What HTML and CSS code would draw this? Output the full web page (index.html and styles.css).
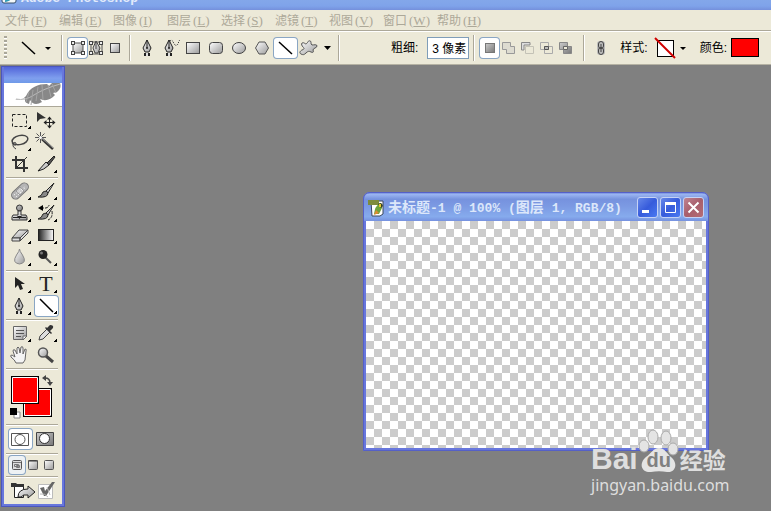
FILE: index.html
```
<!DOCTYPE html>
<html lang="zh-CN">
<head>
<meta charset="utf-8">
<title>Adobe Photoshop</title>
<link rel="stylesheet" href="styles.css">
</head>
<body>
<svg class="defs" aria-hidden="true">
  <defs>
    <linearGradient id="metal" x1="0" y1="0" x2="1" y2="1"><stop offset="0" stop-color="#fff"/><stop offset="1" stop-color="#9a9a9a"/></linearGradient>
    <linearGradient id="ramp"><stop offset="0" stop-color="#222"/><stop offset="1" stop-color="#fff"/></linearGradient>
    <linearGradient id="dark" x1="0" y1="0" x2="1" y2="1"><stop offset="0" stop-color="#ccc"/><stop offset="1" stop-color="#777"/></linearGradient>
    <symbol id="nib" viewBox="0 0 12 18"><path d="M6 1 2 9l2 4h4l2-4z" fill="url(#metal)" stroke="#222"/><path d="M6 1v8" stroke="#222"/><circle cx="6" cy="9" r="1" fill="#222"/><path d="M3 14h6v3H3z" fill="#222"/><path d="M5 14h2v3H5z" fill="#ddd"/></symbol>
  </defs>
</svg>

<header class="titlebar">
  <svg class="app-icon" width="16" height="16" viewBox="0 0 16 16"><rect x="1" y="1" width="14" height="14" rx="2" fill="#f4f8fa" stroke="#38506c"/><path d="M4 14c0-6 3-8 7-9 1 5-1 8-7 9" fill="#2f9bb5"/></svg>
  <h1>Adobe Photoshop</h1>
</header>

<nav class="menubar">
  <button>文件<span>(<u>F</u>)</span></button>
  <button>编辑<span>(<u>E</u>)</span></button>
  <button>图像<span>(<u>I</u>)</span></button>
  <button>图层<span>(<u>L</u>)</span></button>
  <button>选择<span>(<u>S</u>)</span></button>
  <button>滤镜<span>(<u>T</u>)</span></button>
  <button>视图<span>(<u>V</u>)</span></button>
  <button>窗口<span>(<u>W</u>)</span></button>
  <button>帮助<span>(<u>H</u>)</span></button>
</nav>

<div class="options">
  <div class="grip"></div>
  <button class="opt preset" aria-label="直线工具"><svg width="44" height="22"><path d="M10 5 23 17" stroke="#000" stroke-width="1.5"/><path d="M33 10h6l-3 3z"/></svg></button>
  <div class="divider"></div>
  <div class="group modes">
    <button class="opt small on" aria-label="形状图层"><svg width="19" height="20"><rect x="5" y="5" width="10" height="10" fill="url(#metal)" stroke="#555"/><path d="M3 3h4v4H3zM13 3h4v4h-4zM3 13h4v4H3zM13 13h4v4h-4z" fill="#444"/><path d="M4 4h2v2H4zM14 4h2v2h-2zM4 14h2v2H4zM14 14h2v2h-2z" fill="#eee"/></svg></button>
    <button class="opt small" aria-label="路径"><svg width="19" height="20"><path d="M4 4h11v12H4z" fill="none" stroke="#555"/><path d="M2 3h4v4H2zM12 3h4v4h-4zM2 13h4v4H2zM12 13h4v4h-4z" fill="#444"/><path d="M3 4h2v2H3zM13 4h2v2h-2zM3 14h2v2H3zM13 14h2v2h-2z" fill="#eee"/><path d="M9 3 6 10l2 5h3l2-5z" fill="url(#metal)" stroke="#444"/><path d="M9 4v7" stroke="#444"/></svg></button>
    <button class="opt small" aria-label="填充像素"><svg width="19" height="20"><rect x="4.500" y="5.500" width="9" height="9" fill="url(#metal)" stroke="#444"/></svg></button>
  </div>
  <div class="divider"></div>
  <div class="group tools">
    <button class="opt" aria-label="钢笔"><svg width="23" height="20"><use href="#nib" x="5" y="1" width="12" height="18"/></svg></button>
    <button class="opt" aria-label="自由钢笔"><svg width="23" height="20"><use href="#nib" x="4" y="1" width="12" height="18"/><path d="M11 3c4-3 3 6 7 4 2-1 1-4 3-5" fill="none" stroke="#333" stroke-dasharray="1 1"/></svg></button>
    <button class="opt" aria-label="矩形"><svg width="23" height="20"><rect x="4.500" y="4.500" width="13" height="11" fill="url(#metal)" stroke="#444"/></svg></button>
    <button class="opt" aria-label="圆角矩形"><svg width="23" height="20"><rect x="4.500" y="4.500" width="13" height="11" rx="3" fill="url(#metal)" stroke="#444"/></svg></button>
    <button class="opt" aria-label="椭圆"><svg width="23" height="20"><ellipse cx="11" cy="10" rx="6.500" ry="5.500" fill="url(#metal)" stroke="#444"/></svg></button>
    <button class="opt" aria-label="多边形"><svg width="23" height="20"><path d="m4.500 10 3.500-6h6l3.500 6-3.500 6H8z" fill="url(#metal)" stroke="#555"/></svg></button>
    <button class="opt on" aria-label="直线"><svg width="23" height="20"><path d="M5 4 18 16" stroke="#000" stroke-width="1.500"/></svg></button>
    <button class="opt" aria-label="自定形状"><svg width="23" height="20"><path d="M5 5c2-1 3 1 4 1 2-1 2-4 4-3 2 0 0 3 2 4 2 0 5-1 5 1s-4 2-4 4c1 2 0 3-2 2s-3-1-5 1-3 2-5 1-1-3 1-4c3-1 2-2 1-3S4 6 5 5z" fill="url(#metal)" stroke="#555"/></svg></button>
    <button class="opt more" aria-label="几何选项"><svg width="15" height="20"><path d="M4 8h7l-3.500 4z"/></svg></button>
  </div>
  <div class="divider"></div>
  <div class="field weight"><label for="weight">粗细:</label><input id="weight" type="text" value="3 像素"></div>
  <div class="divider"></div>
  <div class="group bool">
    <button class="opt small on" aria-label="新建形状图层"><svg width="19" height="20"><rect x="5.500" y="5.500" width="9" height="9" fill="url(#dark)" stroke="#777"/></svg></button>
    <button class="opt small" aria-label="添加到形状区域"><svg width="19" height="20"><path d="M3.500 4.500h8v4h4v7h-8v-4h-4z" fill="#dddbd0" stroke="#999"/></svg></button>
    <button class="opt small" aria-label="从形状区域减去"><svg width="19" height="20"><path d="M7.500 8.500h8v7h-8z" fill="none" stroke="#c4c2b6"/><path d="M3.500 12V4.500H12V7H6v5z" fill="#ddd" stroke="#888"/></svg></button>
    <button class="opt small" aria-label="交叉形状区域"><svg width="19" height="20"><path d="M3.500 4.500h8v7h-8zM7.500 8.500h8v7h-8z" fill="none" stroke="#aaa"/><path d="M7.500 8.500h4v3h-4z" fill="#bbb" stroke="#555"/></svg></button>
    <button class="opt small" aria-label="重叠形状区域除外"><svg width="19" height="20"><path d="M3.500 4.500h8v7h-8zM7.500 8.500h8v7h-8z" fill="url(#dark)" stroke="#888"/><path d="M7.500 8.500h4v3h-4z" fill="#ece9d8" stroke="#666"/></svg></button>
  </div>
  <div class="divider"></div>
  <button class="opt link" aria-label="链接"><svg width="16" height="20"><rect x="4" y="3" width="8" height="14" rx="3" fill="#bbb"/><rect x="5.500" y="3.500" width="5" height="7" rx="2.500" fill="none" stroke="#444"/><rect x="5.500" y="9.500" width="5" height="7" rx="2.500" fill="none" stroke="#444"/><path d="M8 6v8" stroke="#444"/></svg></button>
  <div class="field style"><span>样式:</span><button class="opt" aria-label="样式"><svg width="34" height="22"><rect x="3.500" y="3.500" width="16" height="16" fill="#fff" stroke="#000"/><path d="m1 1 20 20" stroke="#d00000" stroke-width="2"/><path d="M26 10h6l-3 3z"/></svg></button></div>
  <div class="field color"><span>颜色:</span><button class="swatch" aria-label="颜色"></button></div>
</div>

<main class="workspace">
  <aside class="toolbox">
    <div class="tool-title"></div>
    <div class="feather"><svg width="57" height="23" viewBox="0 0 57 23"><path d="M11 16q7 2 11-3C26 4 34 1 43 1l2 2 3-3h8q2 5-3 9l-4 1 2 2q-5 6-12 5l-3-1 2 3q-8 5-12-2l-1 4q-5-1-4-6-4 2-8 1z" fill="#888"/><path d="M12 16q9 2 18-4T56 1" fill="none" stroke="#bbb"/><path d="m25 9-3 10m7-12-2 15m7-18-2 14m6-16 1 15m5-15 3 12m1-13 4 9" stroke="#a4a4a4"/></svg></div>
    <div class="tool-grid">
      <button class="tool flyout" aria-label="矩形选框"><svg width="26" height="22"><rect x="6.500" y="5.500" width="14" height="12" fill="none" stroke="#222" stroke-dasharray="3 2"/></svg></button>
      <button class="tool" aria-label="移动"><svg width="26" height="22"><path d="M5 3v10l3-3 6-1z" fill="#333"/><path d="M17.500 9v9M13 13.500h9" stroke="#222"/><path d="m17.500 7.500-2.500 3h5zM17.500 19.500l-2.500-3h5zM11.500 13.500l3-2.500v5zM23.500 13.500l-3-2.500v5z" fill="#222"/></svg></button>
      <button class="tool flyout" aria-label="套索"><svg width="26" height="22"><ellipse cx="14" cy="9" rx="8" ry="4.500" transform="rotate(-13 14 9)" fill="none" stroke="#444" stroke-width="1.500"/><path d="M7 11q-2 2 1 3t2-2q-3-2-3 3 1 2 3 3" fill="none" stroke="#444"/></svg></button>
      <button class="tool" aria-label="魔棒"><svg width="26" height="22"><path d="m10 8 11 10" stroke="#333" stroke-width="2.500"/><path d="m10 7 11 10" stroke="#999"/><path d="M8.500 1v11M3 6.500h11M4.500 2.500l8 8M12.500 2.500l-8 8" stroke="#555"/><circle cx="8.500" cy="6.500" r="1.500" fill="#fff"/></svg></button>
      <button class="tool" aria-label="裁切"><svg width="26" height="22"><path d="M10 3v12h12M6 7h12v12" fill="none" stroke="#333" stroke-width="2"/><path d="m11 14 10-10" stroke="#333"/></svg></button>
      <button class="tool flyout" aria-label="切片"><svg width="26" height="22"><path d="m6 18 8-9 3 3q-5 5-11 6z" fill="url(#metal)" stroke="#222"/><path d="m15 10 7-7 1 1-6 8z" fill="#555" stroke="#222"/></svg></button>
    </div>
    <hr>
    <div class="tool-grid">
      <button class="tool flyout" aria-label="修复画笔"><svg width="26" height="22"><rect x="4" y="7" width="20" height="8" rx="4" transform="rotate(-43 14 11)" fill="#b5b5b5" stroke="#777"/><path d="m11 11 4-4 4 4-4 4z" transform="translate(-1)" fill="#ccc" stroke="#999"/><path d="m8 15 12-9m-10 11 9-9" stroke="#fff" stroke-dasharray="1 2"/></svg></button>
      <button class="tool flyout" aria-label="画笔"><svg width="26" height="22"><path d="m22 3-8 8 2 2z" fill="#ccc" stroke="#222"/><path d="M6 17q4-1 5-5 4-2 5 1 0 5-10 4z" fill="#888" stroke="#222"/></svg></button>
      <button class="tool flyout" aria-label="仿制图章"><svg width="26" height="22"><circle cx="13.500" cy="6" r="3" fill="url(#dark)" stroke="#333"/><path d="M12 9h3v4h5l1 2v3H6v-3l1-2h5z" fill="url(#metal)" stroke="#333"/><path d="M7 15h13v1H7zM11 14h5l-2.500 3z" fill="#222"/></svg></button>
      <button class="tool flyout" aria-label="历史记录画笔"><svg width="26" height="22"><path d="m22 3-8 8 2 2z" fill="#ccc" stroke="#222"/><path d="M6 17q4-1 5-5 4-2 5 1 0 5-10 4z" fill="#888" stroke="#222"/><path d="M9 6h5q3-1 3-3M20 9q1 7-4 9" fill="none" stroke="#222" stroke-dasharray="3 1"/><path d="M6 6l5-3v6z"/></svg></button>
      <button class="tool flyout" aria-label="橡皮擦"><svg width="26" height="22"><path d="m6 14 7-8h9l-8 8z" fill="url(#metal)" stroke="#444"/><path d="M6 14v3h8v-3zM14 17l8-8V6l-8 8z" fill="#ddd" stroke="#444"/></svg></button>
      <button class="tool flyout" aria-label="渐变"><svg width="26" height="22"><rect x="6.500" y="5.500" width="15" height="11" fill="url(#ramp)" stroke="#222"/></svg></button>
      <button class="tool flyout" aria-label="模糊"><svg width="26" height="22"><path d="M13.500 3q0 2-3 6-5 8 3 9 8-1 3-9-3-4-3-6z" fill="url(#metal)" stroke="#888"/></svg></button>
      <button class="tool flyout" aria-label="减淡"><svg width="26" height="22"><path d="m13 11 6 6" stroke="#555" stroke-width="2"/><circle cx="11" cy="8.500" r="4.500" fill="#222"/><circle cx="9.500" cy="7" r="1.500" fill="#777"/></svg></button>
    </div>
    <hr>
    <div class="tool-grid">
      <button class="tool flyout" aria-label="路径选择"><svg width="26" height="22"><path d="M9 4v11l3-3 2 5 3-1-2-5h4z" fill="#222"/></svg></button>
      <button class="tool flyout type" aria-label="横排文字">T</button>
      <button class="tool flyout" aria-label="钢笔工具"><svg width="26" height="22"><use href="#nib" x="7" y="2" width="12" height="18"/></svg></button>
      <button class="tool flyout on" aria-label="直线形状"><svg width="26" height="22"><path d="m8 4 13 13" stroke="#000" stroke-width="1.500"/></svg></button>
    </div>
    <hr>
    <div class="tool-grid">
      <button class="tool flyout" aria-label="注释"><svg width="26" height="22"><path d="M7.500 4.500h13v10l-3 3h-10z" fill="url(#metal)" stroke="#666"/><path d="M10 8.500h8M10 11.500h8M10 14.500h5" stroke="#555"/><path d="M17 18v-4h4z" fill="#fff" stroke="#666"/></svg></button>
      <button class="tool flyout" aria-label="吸管"><svg width="26" height="22"><path d="m7 18 1-4 7-7 3 3-7 7z" fill="#ddd" stroke="#444"/><path d="m13 6 6 6 1-1-2-2 3-3q1-3-3-3l-3 3-1-1z" fill="#333"/></svg></button>
      <button class="tool" aria-label="抓手"><svg width="26" height="22"><path d="M10 19q-1-3-5-6-1-2 1-2l3 2-2-6q0-2 2-1l2 4V4q1-2 2 0l1 5 1-6q2-1 2 1v6l2-5q2 0 1 2l-1 9-2 3z" fill="#f4f4f4" stroke="#666"/></svg></button>
      <button class="tool" aria-label="缩放"><svg width="26" height="22"><path d="m14 12 7 6" stroke="#444" stroke-width="3"/><circle cx="11" cy="8.500" r="4.500" fill="url(#metal)" stroke="#555" stroke-width="1.500"/></svg></button>
    </div>
    <hr>
    <div class="colors">
      <svg width="52" height="51" role="img" aria-label="前景色和背景色"><path d="M17 17h29v29H17z"/><path d="M18.500 18.500h26v26h-26z" fill="red" stroke="#fff"/><path d="M5 5h28v28H5z"/><path d="M6.500 6.500h25v25h-25z" fill="red" stroke="#fff"/><path d="M39 7q5 0 5 5" fill="none" stroke="#444" stroke-width="1.500"/><path d="m36 7 4-3v6zM44 15l-3-4h6z" fill="#444"/><path d="M8 41h6v6H8z" fill="#fff" stroke="#888"/><path d="M4 37h7v7H4z"/></svg>
    </div>
    <hr>
    <div class="tool-grid masks">
      <button class="tool on" aria-label="标准模式"><svg width="26" height="24"><path d="M5.500 6.500h17v12h-17z" fill="#fff" stroke="#555"/><circle cx="14" cy="12.500" r="5" fill="#fff" stroke="#555"/></svg></button>
      <button class="tool" aria-label="快速蒙版"><svg width="26" height="24"><path d="M4.500 5.500h17v13h-17z" fill="url(#dark)" stroke="#444"/><circle cx="12.500" cy="11.500" r="5" fill="#fff" stroke="#333"/></svg></button>
    </div>
    <hr>
    <div class="screens">
      <button class="tool on" aria-label="标准屏幕"><svg width="16" height="18"><rect x="3.500" y="4.500" width="9" height="9" rx="1" fill="#ddd" stroke="#555"/><path d="M4 6.500h8M5.500 8.500h4v2h-4zM7.500 9.500h3v2h-3z" fill="none" stroke="#777"/></svg></button>
      <button class="tool" aria-label="带菜单栏全屏"><svg width="16" height="18"><rect x="3.500" y="4.500" width="9" height="9" rx="1" fill="url(#metal)" stroke="#555"/><path d="M3 5h10" stroke="#333"/></svg></button>
      <button class="tool" aria-label="全屏"><svg width="16" height="18"><rect x="3.500" y="4.500" width="9" height="9" rx="1" fill="url(#metal)" stroke="#555"/></svg></button>
    </div>
    <hr>
    <div class="tool-grid masks">
      <button class="tool" aria-label="编辑应用"><svg width="30" height="24"><path d="M8.500 6.500h9v12h-9z" fill="#fff" stroke="#222"/><path d="M5 4h5l1 1h7v3H5z" fill="#333"/><path d="M12 18q0-8 10-8V7l7 6-7 6v-3q-5-1-7 2z" fill="url(#metal)" stroke="#222"/></svg></button>
      <button class="tool" aria-label="在线"><svg width="26" height="24"><path d="M6.500 5.500h14v14h-14z" fill="#fff" stroke="#bbb"/><path d="m8 9 4-1 1 4 7-9h3l-9 14h-2z" fill="#666"/><path d="M8 15q5-1 8 3M15 8l3 8" stroke="#bbb" fill="none"/></svg></button>
    </div>
  </aside>

  <section class="doc">
    <header class="doc-title">
      <svg width="18" height="18" viewBox="0 0 18 18"><path d="M3 2h12v13l-3 2H4z" fill="#fff" stroke="#39475d"/><path d="M0 1h11v5H0z" fill="#7d8b3d"/><path d="M6 15q1-8 5-10 3-1 3 4l-3 6z" fill="#6da33b"/><path d="m6 16 2-5 3 3z" fill="#dd8b31"/><path d="M10 5q4-3 5 2l-2 2z" fill="#384523"/><path d="M11 5h2v3h-2z" fill="#e7c72f"/></svg>
      <h2>未标题<span>-1 @ 100% (</span>图层<span> 1, RGB/8)</span></h2>
      <button class="win" aria-label="最小化"><svg width="19" height="19"><path d="M4 12h7v3H4z" fill="#fff"/></svg></button>
      <button class="win" aria-label="最大化"><svg width="19" height="19"><path d="M4.500 5.500h10v9h-10z" fill="none" stroke="#fff"/><path d="M4 4h11v3H4z" fill="#fff"/></svg></button>
      <button class="win close" aria-label="关闭"><svg width="19" height="19"><path d="m4.500 4.500 10 10m0-10-10 10" stroke="#fff" stroke-width="2"/></svg></button>
    </header>
    <div class="canvas"></div>
  </section>

  <div class="watermark">
    <div class="brand">
      <span class="bai">Bai</span>
      <span class="paw"><svg width="42" height="46" viewBox="0 0 42 46"><g stroke="#aaa"><ellipse cx="6" cy="18" rx="5" ry="6"/><ellipse cx="15" cy="9" rx="5" ry="7"/><ellipse cx="28" cy="10" rx="5" ry="7"/><ellipse cx="35" cy="21" rx="5" ry="6"/></g><path d="M21 20c6 0 8 6 12 9 8 7 4 16-4 15-5-1-11-1-16 0-9 1-13-8-5-15 5-3 7-9 13-9z"/></svg><b>du</b></span>
      <span class="jy">经验</span>
    </div>
    <div class="url">jingyan.baidu.com</div>
  </div>
</main>
</body>
</html>
```
FILE: styles.css
```
* { box-sizing: border-box; }

body {
  margin: 0;
  height: 100vh;
  display: flex;
  flex-direction: column;
  overflow: hidden;
  background: #808080;
  font: 12px/16px "Liberation Sans", "Noto Sans CJK SC", sans-serif;
  color: #000;
}

button {
  margin: 0;
  padding: 0;
  border: 0;
  background: none;
  font: inherit;
  color: inherit;
}

svg { display: block; }

.defs { position: absolute; width: 0; height: 0; }

/* Application title, mostly scrolled off the top edge */
.titlebar {
  flex: none;
  height: 10px;
  display: flex;
  align-items: flex-end;
  gap: 4px;
  padding: 0 0 3px 1px;
  overflow: hidden;
  background: linear-gradient(#83a7ea, #7fa3ea 60%, #7590dc);
}

.app-icon { margin-bottom: 3px; }

.titlebar h1 {
  margin: 0;
  font: bold 13px/16px "Liberation Mono", monospace;
  color: #e2ebfb;
}

.menubar {
  flex: none;
  height: 20px;
  display: flex;
  align-items: center;
  padding: 2px 0 0 5px;
  background: #ece9d8;
}

.menubar button {
  width: 54px;
  display: flex;
  align-items: baseline;
  gap: 2px;
  color: #aca899;
}

.menubar span { font: 13px/16px "Liberation Serif", serif; }

/* Options bar */
.options {
  flex: none;
  height: 35px;
  display: flex;
  align-items: center;
  border-top: 1px solid #aca899;
  border-bottom: 1px solid #b5b2a3;
  box-shadow: inset 0 1px #fff;
  background: #ece9d8;
}

.grip {
  width: 3px;
  height: 24px;
  margin: 0 3px 0 4px;
  background: repeating-linear-gradient(#aaa79a 0 2px, #fff 2px 3px, #ece9d8 3px 4px);
}

.divider {
  flex: none;
  width: 2px;
  height: 26px;
  background: #aca899;
  border-right: 1px solid #fff;
}

.preset { margin: 0 5px 0 2px; }
.group { display: flex; align-items: center; }
.modes { padding: 0 4px 0 5px; }
.tools { padding: 0 3px 0 5px; }
.bool { padding: 0 8px 0 5px; }

.on {
  background: #fff;
  border-radius: 3px;
  box-shadow: 0 0 0 1px #8aa6c4;
}

.field { display: flex; align-items: center; }
.weight { margin: 0 4px 0 51px; gap: 9px; }
.style { margin-left: 11px; gap: 6px; }
.color { margin-left: 12px; gap: 4px; }

.field input {
  width: 42px;
  height: 22px;
  padding: 0 0 0 4px;
  border: 1px solid #7f9db9;
  background: #fff;
  font: 12px/20px "Liberation Sans", "Noto Sans CJK SC", sans-serif;
}

.link { margin-left: 8px; }

.swatch {
  width: 28px;
  height: 19px;
  border: 1px solid #000;
  background: #f00;
}

.workspace { flex: 1; position: relative; }

/* Floating tool palette */
.toolbox {
  position: absolute;
  left: 1px;
  top: 1px;
  width: 64px;
  padding-bottom: 1px;
  border: 3px solid #6877dc;
  border-top-width: 1px;
  outline: 1px solid #4b56bd;
  outline-offset: -1px;
  background: #ece9d8;
}

.tool-title { height: 16px; background: linear-gradient(#5265d9, #7f9fee 70%, #6f9ae8); }

.feather {
  height: 24px;
  border-bottom: 1px solid #aca899;
  background: #fff;
}

.tool-grid { display: grid; grid-template-columns: 26px 26px; grid-auto-rows: 22px; padding-left: 2px; }
.feather + .tool-grid { margin-top: 2px; }
.masks { grid-auto-rows: 24px; }
.masks .on { margin: 2px 0 2px 3px; }
.masks .on svg { margin: -2px 0 -2px -3px; }

.tool { position: relative; }

.tool-grid .flyout.on { margin: 1px 0 1px 3px; }
.flyout.on svg { margin: -1px 0 -1px -3px; }

.flyout::after {
  content: "";
  position: absolute;
  right: 1px;
  bottom: 2px;
  width: 3px;
  height: 3px;
  background: linear-gradient(135deg, transparent 40%, #000 40%);
}

.type { font: 22px/22px "Liberation Serif", serif; color: #222; padding-left: 2px; }

.toolbox hr {
  height: 2px;
  margin: 2px 4px 1px 2px;
  border: 0;
  border-top: 1px solid #aca899;
  background: #fff;
}

.colors { padding-left: 2px; }
.screens { display: flex; padding-left: 5px; }
.screens .on { background: #eef2f4; }

/* Document window */
.doc {
  position: absolute;
  left: 363px;
  top: 127px;
  width: 346px;
  border: solid #6877dc;
  border-width: 0 3px 3px;
  outline: 1px solid #5560c8;
  outline-offset: -1px;
  border-radius: 7px 7px 0 0;
  background: #6877dc;
}

.doc-title {
  height: 29px;
  display: flex;
  align-items: center;
  gap: 2px;
  margin: 0 -2px;
  padding: 2px 4px 0;
  border-radius: 6px 6px 0 0;
  background: linear-gradient(#5a70cf, #9bb5f1 8%, #7692de 25%, #7c9ae3 50%, #86abed 85%, #7691df);
}

.doc-title h2 {
  flex: 1;
  margin: 0;
  white-space: pre;
  font: bold 14px/20px "Noto Sans CJK SC", sans-serif;
  color: #dce7fa;
}

.doc-title h2 span { font: bold 13px/20px "Liberation Mono", monospace; }

.win {
  width: 21px;
  height: 21px;
  border: 1px solid #c5d2f5;
  border-radius: 3px;
  background: linear-gradient(135deg, #6688ea, #365bdb 50%, #4a7af2);
}

.close { background: linear-gradient(135deg, #c08492, #a85e6c 50%, #b56c74); }

.canvas {
  height: 227px;
  background: repeating-conic-gradient(#ccc 0 25%, #fff 0 50%) 0 0 / 16px 16px;
}

/* Site mark laid over the workspace */
.watermark {
  position: absolute;
  left: 591px;
  top: 363px;
  color: #dedede;
}

.brand { display: flex; align-items: flex-end; height: 46px; }
.bai { font: bold 30px/30px "Liberation Sans", sans-serif; }
.paw { position: relative; fill: #e4e4e4; }
.paw b {
  position: absolute;
  inset: 22px 0 0;
  text-align: center;
  font: bold 20px/20px "Liberation Sans", sans-serif;
  color: #808080;
}
.jy { font: bold 23px/30px "Noto Sans CJK SC", sans-serif; }
.url { font: 16px/22px "Noto Sans", sans-serif; }
```
